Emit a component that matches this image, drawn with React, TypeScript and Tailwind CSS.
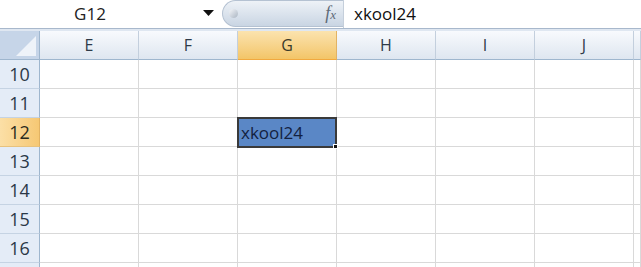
import React from 'react';

const cols = ['E', 'F', 'G', 'H', 'I', 'J', ''];
const rows = [10, 11, 12, 13, 14, 15, 16, 17];
const font = { fontFamily: '"Open Sans", "Noto Sans", sans-serif' };

export default function App() {
  return (
    <div className="w-[641px] h-[267px] overflow-hidden bg-white text-[#222]" style={font}>
      {/* formula bar */}
      <div className="flex h-[29px] border-b border-[#a8b8cc] bg-white">
        <div className="relative w-[222px] flex items-center justify-center">
          <span className="text-[17px] text-[#222] pr-[42px]">G12</span>
          <svg className="absolute left-[203px] top-[10px]" width="11" height="6" viewBox="0 0 11 6">
            <path d="M0 0 H11 L5.5 6 Z" fill="#111" />
          </svg>
        </div>
        <div className="relative w-[121px] h-[27px] rounded-l-full bg-gradient-to-b from-[#eef2f7] to-[#c9d5e3] border border-[#b5c2d2] border-r-0 flex items-center justify-end pr-[7px]">
          <div className="absolute left-[6px] top-[8px] w-[9px] h-[9px] rounded-full bg-gradient-to-br from-[#f5f7fa] to-[#aab5c2]" />
          <span className="italic text-[18px] text-[#5f6b78]" style={{ fontFamily: '"Liberation Serif", serif' }}>
            f<span className="text-[13px]">x</span>
          </span>
        </div>
        <div className="flex-1 flex items-center pl-[10px] border-l border-[#c5cfdb]">
          <span className="text-[17px] text-[#111]">xkool24</span>
        </div>
      </div>
      <div className="h-[2px] bg-[#dfe7f1]" />

      {/* grid */}
      <div className="grid grid-cols-[40px_repeat(6,99px)_1fr]">
        {/* header row */}
        <div className="h-[29px] border-r border-b border-[#9eb6ce] bg-[#c6d5e8] relative overflow-hidden">
          <svg className="absolute right-[3px] bottom-[3px]" width="20" height="20" viewBox="0 0 20 20">
            <path d="M20 0 V20 H0 Z" fill="#eef3f9" />
          </svg>
        </div>
        {cols.map((c, i) => (
          <div
            key={i}
            className={
              c === 'G'
                ? 'h-[29px] flex items-center justify-center border-r border-[#e2b364] border-b border-b-[#f1a93f] bg-gradient-to-b from-[#fbe3ae] to-[#f3c567] text-[#3a3a2a] text-[16px]'
                : 'h-[29px] flex items-center justify-center border-r border-[#c3cfdd] border-b border-b-[#9eb6ce] bg-gradient-to-b from-[#f8fafd] to-[#dee6f0] text-[#2e3a48] text-[16px]'
            }
          >
            {c}
          </div>
        ))}

        {rows.map((r) => (
          <React.Fragment key={r}>
            <div
              className={
                r === 12
                  ? 'h-[29px] flex items-center justify-center border-r border-[#e2b364] border-b border-b-[#e7c27e] bg-gradient-to-r from-[#fbdfa6] to-[#f6c874] text-[#2b2b20] text-[18px]'
                  : 'h-[29px] flex items-center justify-center border-r border-[#9eb6ce] border-b border-b-[#c5d3e3] bg-[#e4ecf7] text-[#2b3847] text-[18px]'
              }
            >
              {r < 17 ? r : ''}
            </div>
            {cols.map((c, i) => (
              <div key={i} className="h-[29px] relative border-r border-b border-[#d9d9d9]">
                {r === 12 && c === 'G' && (
                  <div className="absolute -left-[1px] -top-[1px] w-[100px] h-[31px] border-2 border-[#3a3a3a] bg-[#5a87c6] flex items-center pl-[2px] z-10">
                    <span className="text-[17px] text-[#13213f]">xkool24</span>
                    <div className="absolute -right-[3px] -bottom-[3px] w-[5px] h-[5px] bg-[#111] border border-white" />
                  </div>
                )}
              </div>
            ))}
          </React.Fragment>
        ))}
      </div>
    </div>
  );
}
